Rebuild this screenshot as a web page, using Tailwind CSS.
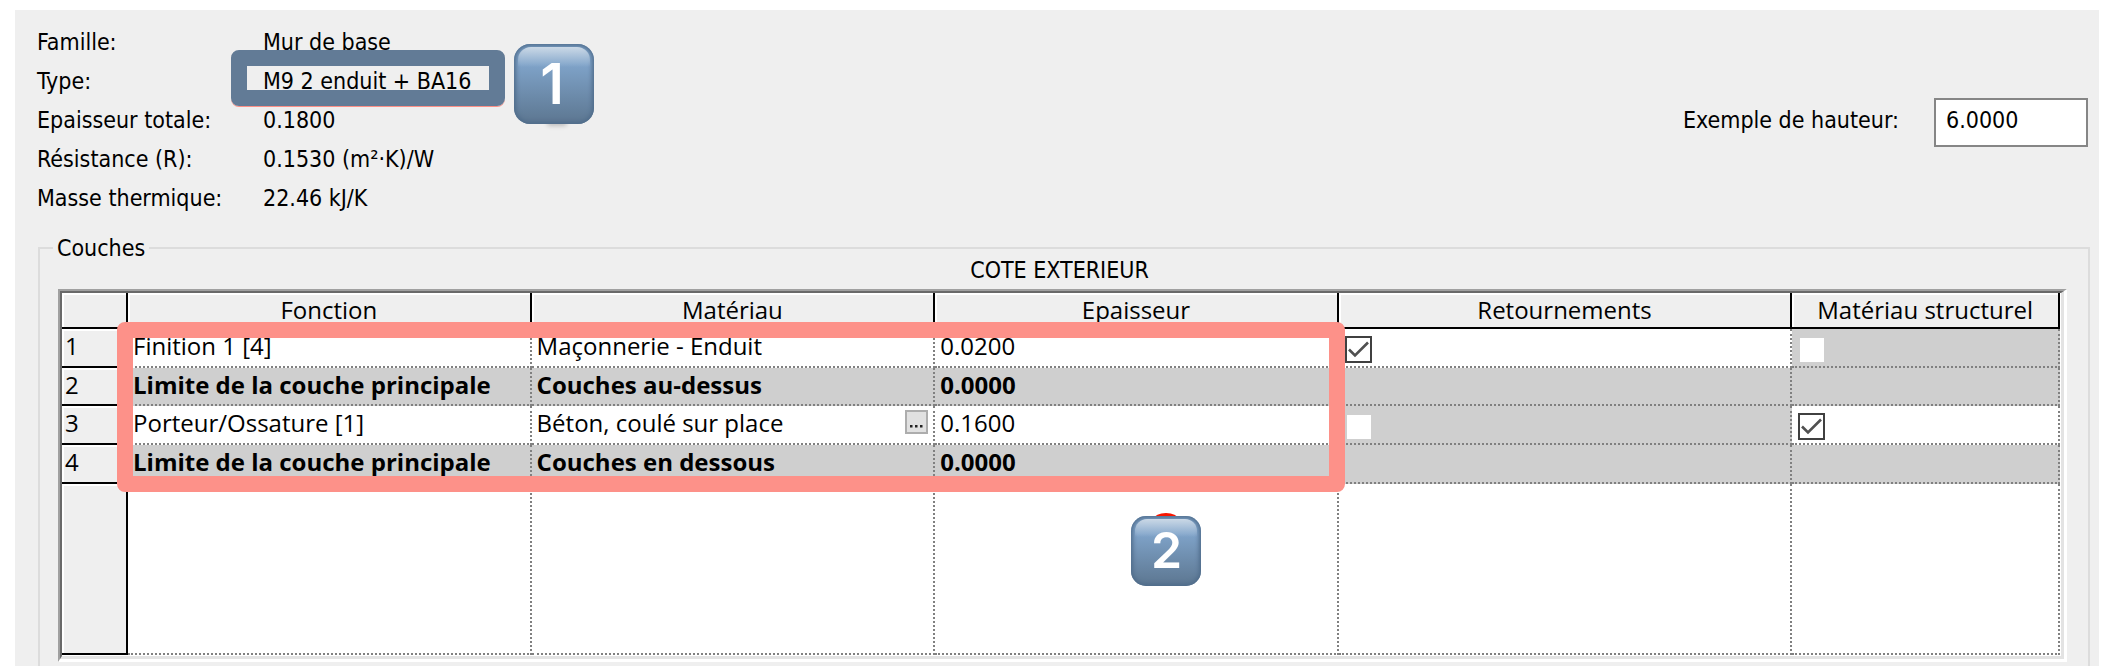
<!DOCTYPE html>
<html lang="fr">
<head>
<meta charset="utf-8">
<title>Modifier l'assemblage</title>
<script src="https://cdn.jsdelivr.net/npm/@tailwindcss/browser@4"></script>
</head>
<body class="bg-white text-black">
<main class="mt-[10px] mr-[5px] mb-[6px] ml-[15px] bg-[#efefef] pt-[13px] font-['DejaVu_Sans_Condensed','DejaVu_Sans',sans-serif] text-[23px]">
  <header class="flex items-start justify-between pr-[11px] pl-[22px]">
    <dl class="grid grid-cols-[226px_auto] leading-[39px]">
      <dt>Famille:</dt><dd>Mur de base</dd>
      <dt>Type:</dt>
      <dd class="relative whitespace-nowrap">M9 2 enduit + BA16
        <span class="absolute -top-[12px] -left-[32px] h-[56px] w-[274px] rounded-lg border-16 border-[#627b96] shadow-[0_1px_0_0_#fd9087]"></span>
        <span class="absolute top-[58px] left-[284px] h-[6px] w-[20px] rounded-full bg-black/20 blur-[2px]"></span>
        <span class="absolute -top-[18px] left-[251px] flex size-[80px] items-center justify-center overflow-hidden rounded-[16px] bg-linear-to-b from-[#7fa3c9] from-25% to-[#5c7690] pr-1 font-['Inter',sans-serif] text-[56px] leading-none font-semibold text-white shadow-[inset_0_0_4px_2px_#4f6c8b]">
          <span class="absolute inset-x-[4px] top-[3px] h-[20px] rounded-t-[13px] bg-linear-to-b from-[#cbd9e7] to-[#7fa3c9]/0"></span>
          <span class="relative">1</span>
        </span>
      </dd>
      <dt>Epaisseur totale:</dt><dd>0.1800</dd>
      <dt>Résistance (R):</dt><dd>0.1530 (m²·K)/W</dd>
      <dt>Masse thermique:</dt><dd>22.46 kJ/K</dd>
    </dl>
    <div class="mt-[75px] flex items-start gap-[35px]">
      <label for="hauteur" class="leading-[44px]">Exemple de hauteur:</label>
      <input id="hauteur" type="text" value="6.0000" class="h-[49px] w-[154px] border-2 border-[#868686] bg-white pb-[5px] pl-[10px]">
    </div>
  </header>

  <fieldset class="mt-[18px] mr-[9px] ml-[23px] min-w-0 border-2 border-b-0 border-[#dcdcdc] pr-[21px] pb-1 pl-3">
    <legend class="ml-px px-1 leading-[24px]">Couches</legend>
    <p class="mb-[9px] text-center leading-[20px]">COTE EXTERIEUR</p>
    <div class="ml-[6px] border-t-2 border-r-3 border-b-3 border-l-2 border-t-[#a0a0a0] border-r-white border-b-white border-l-[#a0a0a0]">
      <div class="relative border-t-2 border-r-3 border-b-3 border-l-2 border-t-[#696969] border-r-[#e3e3e3] border-b-[#e3e3e3] border-l-[#696969] bg-white pr-px pb-px">
        <table class="w-full table-fixed border-separate border-spacing-0 font-['Open_Sans','Noto_Sans',sans-serif] text-[24px] leading-[34px] [&_td]:border-r-2 [&_td]:border-b-2 [&_td]:border-dotted [&_td]:border-[#808080] [&_td]:p-0 [&_td]:align-top [&_th]:border-r-2 [&_th]:border-b-2 [&_th]:border-black [&_th]:bg-[#efefef] [&_th]:p-0 [&_th]:align-top [&_th]:font-normal [&_th]:shadow-[inset_2px_2px_0_0_#fff]">
          <colgroup>
            <col class="w-[66px]"><col class="w-[20.2%]"><col class="w-[20.2%]"><col class="w-[20.2%]"><col class="w-[22.7%]"><col>
          </colgroup>
          <thead>
            <tr class="h-[36px]">
              <th></th><th scope="col">Fonction</th><th scope="col">Matériau</th><th scope="col">Epaisseur</th><th scope="col">Retournements</th><th scope="col">Matériau structurel</th>
            </tr>
          </thead>
          <tbody>
            <tr class="h-[39px]">
              <th scope="row" class="text-left"><span class="pl-[3px]">1</span></th>
              <td><span class="pl-[5px]">Finition 1 [4]</span></td>
              <td><span class="pl-[5px]">Maçonnerie - Enduit</span></td>
              <td><span class="pl-[5px]">0.0200</span></td>
              <td>
                <div class="relative mt-[7px] ml-[6px] size-[27px]">
                  <input type="checkbox" checked aria-label="Retournements, couche 1" class="block size-[27px] appearance-none border-2 border-[#404040] bg-white">
                  <svg class="pointer-events-none absolute inset-0" viewBox="0 0 27 27" fill="none" stroke="#505050" stroke-width="2.6"><path d="M4 13.5 10 19.5 23 6.5"/></svg>
                </div>
              </td>
              <td class="bg-[#cfcfcf]"><input type="checkbox" disabled aria-label="Matériau structurel, couche 1" class="mt-[9px] ml-[8px] block size-[24px] appearance-none bg-white"></td>
            </tr>
            <tr class="h-[38px] bg-[#cfcfcf] font-bold">
              <th scope="row" class="text-left"><span class="pl-[3px]">2</span></th>
              <td><span class="pl-[5px]">Limite de la couche principale</span></td>
              <td><span class="pl-[5px]">Couches au-dessus</span></td>
              <td><span class="pl-[5px]">0.0000</span></td>
              <td></td><td></td>
            </tr>
            <tr class="h-[39px]">
              <th scope="row" class="text-left"><span class="pl-[3px]">3</span></th>
              <td><span class="pl-[5px]">Porteur/Ossature [1]</span></td>
              <td><div class="flex items-start justify-between pr-[5px] pl-[5px]">Béton, coulé sur place
                <button type="button" aria-label="Parcourir" class="mt-1 flex h-[24px] w-[23px] items-center justify-center border-2 border-[#adadad] bg-[#e1e1e1] pt-[8px]"><svg class="h-[3px] w-[13px]" viewBox="0 0 13 3" fill="#222"><path d="M0 0h2.500v2.500h-2.500zM5 0h2.500v2.500h-2.500zM10 0h2.500v2.500h-2.500z"/></svg></button></div></td>
              <td><span class="pl-[5px]">0.1600</span></td>
              <td class="bg-[#cfcfcf]"><input type="checkbox" disabled aria-label="Retournements, couche 3" class="mt-[9px] ml-[8px] block size-[24px] appearance-none bg-white"></td>
              <td>
                <div class="relative mt-[7px] ml-[6px] size-[27px]">
                  <input type="checkbox" checked aria-label="Matériau structurel, couche 3" class="block size-[27px] appearance-none border-2 border-[#404040] bg-white">
                  <svg class="pointer-events-none absolute inset-0" viewBox="0 0 27 27" fill="none" stroke="#505050" stroke-width="2.6"><path d="M4 13.5 10 19.5 23 6.5"/></svg>
                </div>
              </td>
            </tr>
            <tr class="h-[39px] bg-[#cfcfcf] font-bold">
              <th scope="row" class="text-left"><span class="pl-[3px]">4</span></th>
              <td><span class="pl-[5px]">Limite de la couche principale</span></td>
              <td><span class="pl-[5px]">Couches en dessous</span></td>
              <td><span class="pl-[5px]">0.0000</span></td>
              <td></td><td></td>
            </tr>
            <tr class="h-[171px]"><th></th><td></td><td></td><td></td><td></td><td></td></tr>
          </tbody>
        </table>
        <div class="pointer-events-none absolute top-[29px] left-[55px] h-[170px] w-[calc(60.6%+17px)] rounded-lg border-16 border-[#fd9189]"></div>
        <div class="absolute top-[220px] left-[53.5%] h-[12px] w-[70px]"><div class="mx-auto h-[12px] w-[24px] rounded-[50%] bg-[#f81500]"></div></div>
        <div class="absolute top-[223px] left-[53.5%] flex size-[70px] items-center justify-center overflow-hidden rounded-[15px] bg-linear-to-b from-[#7fa3c9] from-25% to-[#5c7690] pb-[2px] font-['Inter',sans-serif] text-[50px] leading-none font-semibold text-white shadow-[inset_0_0_4px_2px_#4f6c8b]">
          <span class="absolute inset-x-[4px] top-[3px] h-[18px] rounded-t-[12px] bg-linear-to-b from-[#cbd9e7] to-[#7fa3c9]/0"></span>
          <span class="relative">2</span>
        </div>
      </div>
    </div>
  </fieldset>
</main>
</body>
</html>
